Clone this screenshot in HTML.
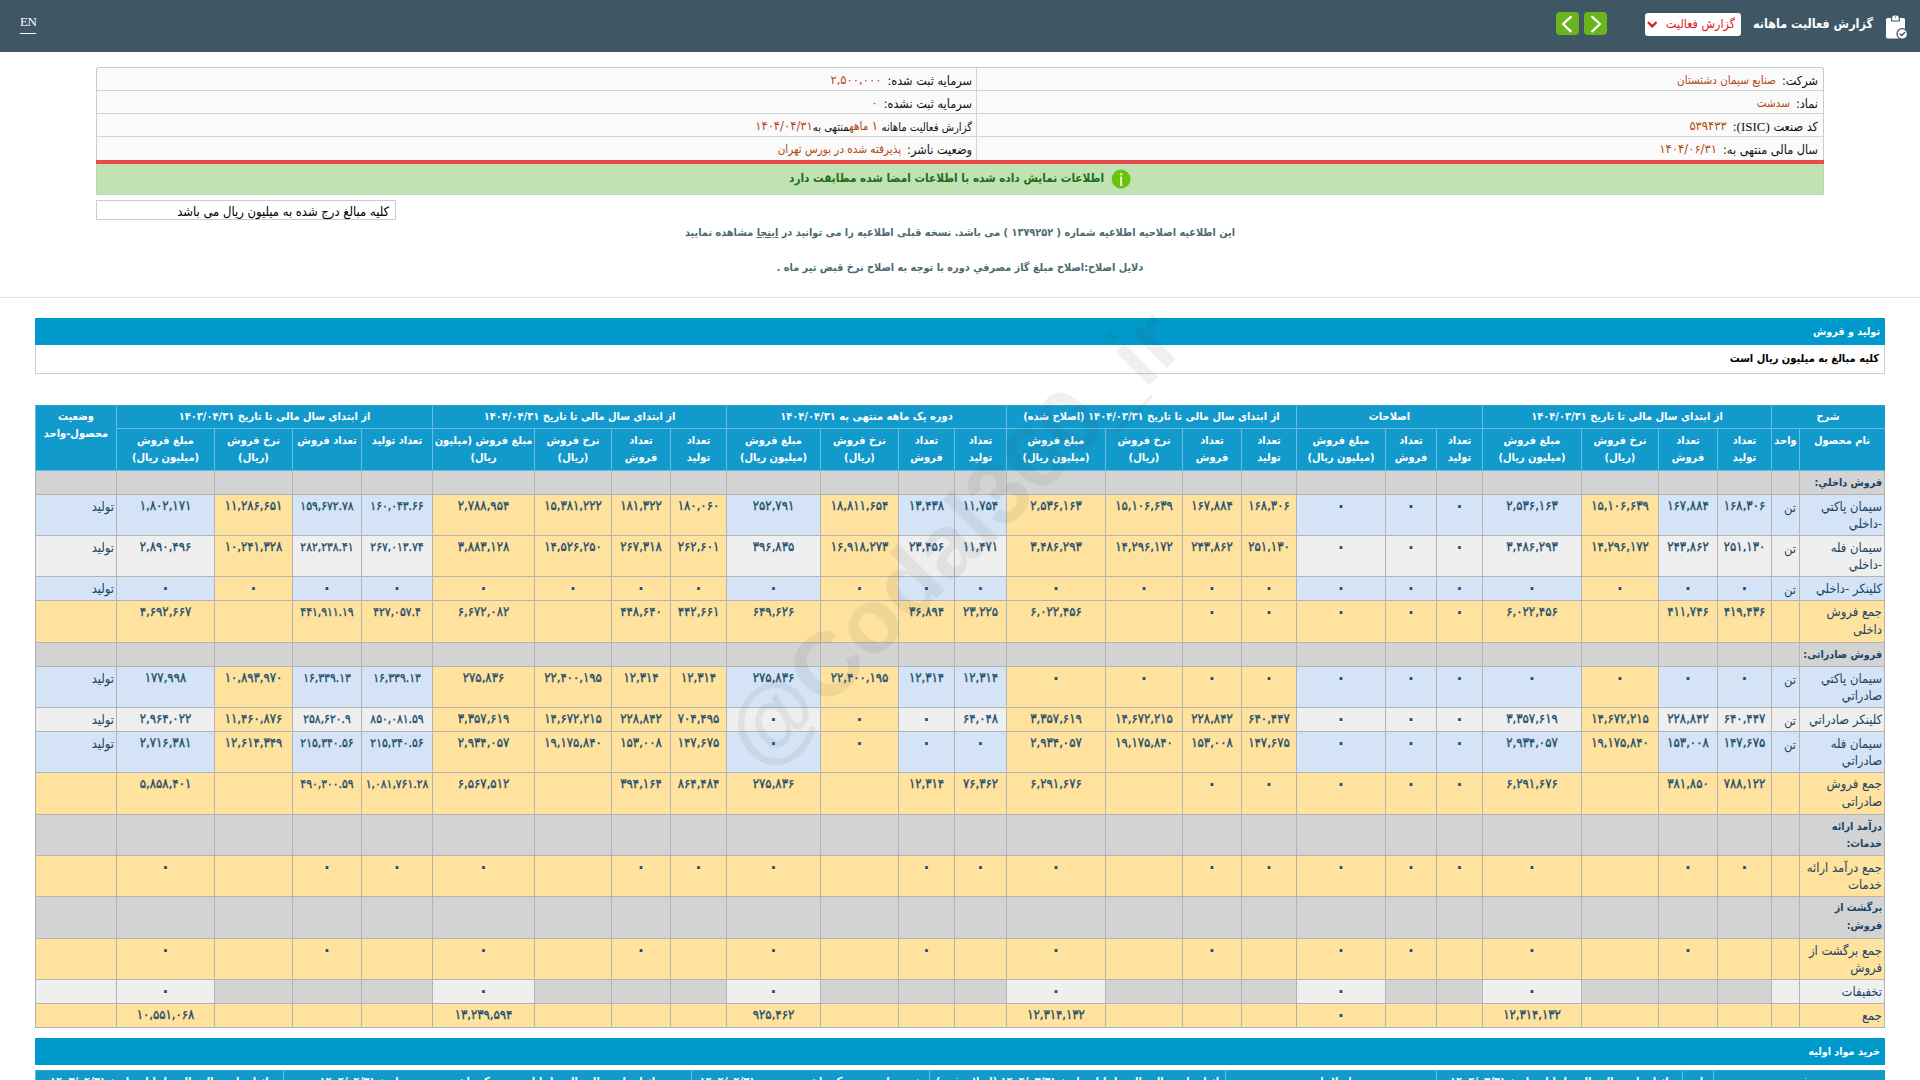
<!DOCTYPE html>
<html lang="fa" dir="rtl">
<head>
<meta charset="utf-8">
<title>گزارش فعالیت ماهانه</title>
<style>
*{box-sizing:border-box}
html,body{margin:0;padding:0}
body{width:1920px;height:1080px;overflow:hidden;background:#fff;position:relative;direction:rtl;
 font-family:"DejaVu Sans Condensed","DejaVu Sans",sans-serif;font-size:12px;color:#000;font-stretch:condensed}
.abs{position:absolute}
#top{left:0;top:0;width:1920px;height:52px;background:#3f5664}
#en{left:20px;top:11px;width:16px;height:23px;border-bottom:1px solid #fff;color:#fff;font-family:"Liberation Serif",serif;font-size:13px;line-height:22px;direction:ltr;text-align:left;letter-spacing:-.4px}
#ttl{right:47px;top:13px;color:#fff;font-weight:bold;font-size:12.5px;line-height:22px;white-space:nowrap}
#sel{left:1645px;top:13px;width:96px;height:23px;background:#fff;border-radius:3px;color:#e0151c;font-size:12.4px;line-height:22px;padding-right:6px;white-space:nowrap}
.gb{top:12px;width:23px;height:23px;background:#6ab41c;border-radius:4px}
#info{left:96px;top:67px;width:1728px;height:94px;border:1px solid #ccc;border-bottom:none;border-radius:3px 3px 0 0;background:#fafafa}
.ir{position:absolute;right:0;left:0;height:1px;background:#d4d4d4}
.it{position:absolute;white-space:nowrap;font-size:12.6px;line-height:22px;color:#111}
.it b{font-weight:normal;color:#b2480e;margin-right:6px;font-size:11.6px;position:relative;top:-1px}
#red{left:96px;top:160px;width:1728px;height:4px;background:#e9494b}
#grn{left:96px;top:164px;width:1728px;height:31px;background:#c1e2b3;border:1px solid #b9d6ac;border-top:none}
#note{left:96px;top:200px;width:300px;height:20px;border:1px solid #ccc;font-size:12.9px;line-height:21px;overflow:hidden;padding-right:6px;white-space:nowrap}
.msg{left:0;width:1920px;text-align:center;color:#4e6a70;font-weight:bold;font-size:10.85px;line-height:20px;white-space:nowrap}
#hr{left:0;top:297px;width:1920px;height:1px;background:#e3e3e3}
.bar{left:35px;width:1850px;height:27px;background:#0099cc;color:#fff;font-weight:bold;font-size:10.7px;line-height:27px;padding-right:5px}
#sub{left:35px;top:345px;width:1850px;height:29px;border:1px solid #ccc;border-top:none;font-weight:bold;font-size:11px;line-height:28px;padding-right:5px}

.tb{border-collapse:separate;border-spacing:0;table-layout:fixed;width:1850px;box-sizing:border-box;border-top:1px solid #2ea3d1}
.tb th:first-child{border-right:1px solid #129acc}
.tb td:first-child{border-right:1px solid #b4b4b4}
.tb th,.tb td{padding:0;margin:0;overflow:hidden;white-space:nowrap;vertical-align:top;line-height:17px}
.tb th{background:#129acc;color:#fff;font-weight:bold;font-size:11px;text-align:center;border-left:1px solid #66bde0;border-bottom:1px solid #66bde0;padding-top:2px}
.tb td{border-left:1px solid #b4b4b4;border-bottom:1px solid #b4b4b4;padding-top:4px;font-size:12.9px;color:#1c4565}
.tb td.n{text-align:center;font-weight:normal;font-size:13px;padding-top:2px;color:#1d4e6d;-webkit-text-stroke:.35px #1d4e6d}
.tb tr.h2 th{padding-top:3px}
.tb td.c{text-align:right;padding-right:3px}
.tb td.nm{text-align:right;padding-right:2px;padding-top:3px}
.tb td.tl{line-height:18px;padding-top:2px}
.tb td.bd{font-weight:bold;font-size:10.7px;padding-top:3px}
.tb td.bd.tl{padding-top:2px}
.tb td.st{text-align:right;padding-right:2px;padding-top:3px}
.tb td.b{background:#d4e4f6}
.tb td.e{background:#efefef}
.tb td.y{background:#ffe29e}
.tb td.g{background:#d3d3d3}
.tb td.dc{font-size:12px;padding-top:3px}
.tb td.z{font-size:17px;padding-top:2px;font-weight:bold;-webkit-text-stroke:0}
.tb tr.z0 td{height:0;padding:0;border:0;line-height:0;font-size:0}
#wm{left:553px;top:488px;width:800px;height:100px;text-align:center;direction:ltr;font-family:"Liberation Sans",sans-serif;font-weight:bold;font-size:90.5px;line-height:100px;color:rgba(60,60,60,.08);transform:rotate(-45deg);white-space:nowrap;pointer-events:none}
.dg{font-family:"DejaVu Sans",sans-serif;font-size:12.5px;font-stretch:normal}
.sf{font-family:"Liberation Serif",serif;font-size:13px}
</style>
</head>
<body>
<div id="top" class="abs"></div>
<div id="en" class="abs">EN</div>
<div id="ttl" class="abs">گزارش فعالیت ماهانه</div>
<div id="sel" class="abs">گزارش فعالیت</div>
<svg class="abs" style="left:1645px;top:19px" width="14" height="11" viewBox="0 0 14 11"><path d="M3.5 3.7 L7.2 7.4 L10.9 3.7" fill="none" stroke="#e01a1a" stroke-width="2.2" stroke-linecap="round" stroke-linejoin="miter"/></svg>
<div class="abs gb" style="left:1584px"><svg width="23" height="23" viewBox="0 0 23 23" style="display:block"><path d="M8.2 4.8 L16 12 L8.2 19.3" fill="none" stroke="#fff" stroke-width="2.3" stroke-linecap="round" stroke-linejoin="round"/></svg></div>
<div class="abs gb" style="left:1556px"><svg width="23" height="23" viewBox="0 0 23 23" style="display:block"><path d="M14.8 4.8 L7 12 L14.8 19.3" fill="none" stroke="#fff" stroke-width="2.3" stroke-linecap="round" stroke-linejoin="round"/></svg></div>

<svg class="abs" style="left:1884px;top:13px" width="26" height="28" viewBox="0 0 26 28">
<rect x="2" y="5" width="19" height="20.4" rx="1.6" fill="#fff"/>
<path d="M7.5 8 V5 A3 3 0 0 1 10.5 2 H12.3 A3 3 0 0 1 15.3 5 V8 Z" fill="#fff" stroke="#3f5664" stroke-width="1.1" stroke-linejoin="round"/>
<circle cx="11.4" cy="4.1" r=".7" fill="#3f5664"/>
<circle cx="18.3" cy="20.9" r="5.9" fill="#3f5664"/>
<circle cx="18.3" cy="20.9" r="4.6" fill="#fff"/>
<path d="M16.1 21 L17.7 22.5 L20.7 19.6" fill="none" stroke="#3f5664" stroke-width="1.4" stroke-linecap="round" stroke-linejoin="round"/>
</svg>
<div id="info" class="abs">
 <div class="ir" style="top:22px"></div><div class="ir" style="top:45px"></div><div class="ir" style="top:68px"></div>
 <div class="abs" style="left:879px;top:0;width:1px;height:93px;background:#d4d4d4"></div>
 <div class="it" style="right:5px;top:2px">شرکت:<b>صنایع سیمان دشتستان</b></div>
 <div class="it" style="right:5px;top:25px">نماد:<b>سدشت</b></div>
 <div class="it" style="right:5px;top:48px">کد صنعت <span class="sf">(ISIC)</span>:<b class="dg">۵۳۹۴۳۳</b></div>
 <div class="it" style="right:5px;top:71px">سال مالی منتهی به:<b class="dg">۱۴۰۴/۰۶/۳۱</b></div>
 <div class="it" style="right:851px;top:2px">سرمایه ثبت شده:<b class="dg">۲,۵۰۰,۰۰۰</b></div>
 <div class="it" style="right:851px;top:25px">سرمایه ثبت نشده:<b class="dg">۰</b></div>
 <div class="it" style="right:851px;top:48px;font-size:11.2px">گزارش فعالیت ماهانه<b style="margin:0"> <span class="dg">۱</span> ماهه</b>منتهی به<b style="margin:0" class="dg">۱۴۰۴/۰۴/۳۱</b></div>
 <div class="it" style="right:851px;top:71px">وضعیت ناشر:<b>پذیرفته شده در بورس تهران</b></div>
</div>
<div id="red" class="abs"></div>
<div id="grn" class="abs"></div>
<div class="abs" style="left:789px;top:167px;width:317px;text-align:left;color:#1b6e1b;font-weight:bold;font-size:11.7px;line-height:22px;white-space:nowrap">اطلاعات نمایش داده شده با اطلاعات امضا شده مطابقت دارد</div>
<svg class="abs" style="left:1111px;top:169px" width="20" height="20" viewBox="0 0 20 20"><circle cx="10.1" cy="10.1" r="9.5" fill="#6cc00f"/><rect x="9.1" y="7.4" width="2" height="9.6" rx=".6" fill="#e6f7cf"/><circle cx="10.1" cy="5.2" r="1.25" fill="#e6f7cf"/></svg>
<div id="note" class="abs">کلیه مبالغ درج شده به میلیون ریال می باشد</div>
<div class="abs msg" style="top:223px">این اطلاعیه اصلاحیه اطلاعیه شماره ( ۱۳۷۹۲۵۲ ) می باشد. نسخه قبلی اطلاعیه را می توانید در <u>اینجا</u> مشاهده نمایید</div>
<div class="abs msg" style="top:258px">دلایل اصلاح:اصلاح مبلغ گاز مصرفي دوره با توجه به اصلاح نرخ قبض تیر ماه .</div>
<div id="hr" class="abs"></div>
<div class="abs bar" style="top:318px">تولید و فروش</div>
<div id="sub" class="abs">کلیه مبالغ به میلیون ریال است</div>
<!--TABLE-->
<table id="t1" class="abs tb" style="left:35px;top:405px"><colgroup>
<col style="width:86px">
<col style="width:28px">
<col style="width:54px">
<col style="width:59px">
<col style="width:77px">
<col style="width:99px">
<col style="width:46px">
<col style="width:51px">
<col style="width:89px">
<col style="width:55px">
<col style="width:59px">
<col style="width:77px">
<col style="width:99px">
<col style="width:52px">
<col style="width:56px">
<col style="width:78px">
<col style="width:94px">
<col style="width:56px">
<col style="width:59px">
<col style="width:77px">
<col style="width:102px">
<col style="width:71px">
<col style="width:69px">
<col style="width:78px">
<col style="width:98px">
<col style="width:81px">
</colgroup>
<tr class="z0"><td></td><td></td><td></td><td></td><td></td><td></td><td></td><td></td><td></td><td></td><td></td><td></td><td></td><td></td><td></td><td></td><td></td><td></td><td></td><td></td><td></td><td></td><td></td><td></td><td></td><td></td></tr>
<tr class="h1" style="height:23px"><th colspan="2">شرح</th><th colspan="4">از ابتدای سال مالی تا تاریخ ۱۴۰۴/۰۳/۳۱</th><th colspan="3">اصلاحات</th><th colspan="4">از ابتدای سال مالی تا تاریخ ۱۴۰۴/۰۳/۳۱ (اصلاح شده)</th><th colspan="4">دوره یک ماهه منتهی به ۱۴۰۴/۰۴/۳۱</th><th colspan="4">از ابتدای سال مالی تا تاریخ ۱۴۰۴/۰۴/۳۱</th><th colspan="4">از ابتدای سال مالی تا تاریخ ۱۴۰۳/۰۴/۳۱</th><th rowspan="2">وضعیت<br>محصول-واحد</th></tr>
<tr class="h2" style="height:42px"><th>نام محصول</th><th>واحد</th><th>تعداد<br>تولید</th><th>تعداد<br>فروش</th><th>نرخ فروش<br>(ریال)</th><th>مبلغ فروش<br>(میلیون ریال)</th><th>تعداد<br>تولید</th><th>تعداد<br>فروش</th><th>مبلغ فروش<br>(میلیون ریال)</th><th>تعداد<br>تولید</th><th>تعداد<br>فروش</th><th>نرخ فروش<br>(ریال)</th><th>مبلغ فروش<br>(میلیون ریال)</th><th>تعداد<br>تولید</th><th>تعداد<br>فروش</th><th>نرخ فروش<br>(ریال)</th><th>مبلغ فروش<br>(میلیون ریال)</th><th>تعداد<br>تولید</th><th>تعداد<br>فروش</th><th>نرخ فروش<br>(ریال)</th><th>مبلغ فروش (میلیون<br>ریال)</th><th>تعداد تولید</th><th>تعداد فروش</th><th>نرخ فروش<br>(ریال)</th><th>مبلغ فروش<br>(میلیون ریال)</th></tr>
<tr style="height:24px"><td class="g nm bd">فروش داخلي:</td><td class="g c"></td><td class="g n"></td><td class="g n"></td><td class="g n"></td><td class="g n"></td><td class="g n"></td><td class="g n"></td><td class="g n"></td><td class="g n"></td><td class="g n"></td><td class="g n"></td><td class="g n"></td><td class="g n"></td><td class="g n"></td><td class="g n"></td><td class="g n"></td><td class="g n"></td><td class="g n"></td><td class="g n"></td><td class="g n"></td><td class="g n"></td><td class="g n"></td><td class="g n"></td><td class="g n"></td><td class="g st"></td></tr>
<tr style="height:41px"><td class="b nm">سيمان پاكتي<br>-داخلي</td><td class="b c">تن</td><td class="b n">۱۶۸,۳۰۶</td><td class="b n">۱۶۷,۸۸۴</td><td class="y n">۱۵,۱۰۶,۶۳۹</td><td class="b n">۲,۵۳۶,۱۶۳</td><td class="b n z">۰</td><td class="b n z">۰</td><td class="b n z">۰</td><td class="y n">۱۶۸,۳۰۶</td><td class="y n">۱۶۷,۸۸۴</td><td class="y n">۱۵,۱۰۶,۶۳۹</td><td class="y n">۲,۵۳۶,۱۶۳</td><td class="b n">۱۱,۷۵۴</td><td class="b n">۱۳,۴۳۸</td><td class="y n">۱۸,۸۱۱,۶۵۴</td><td class="b n">۲۵۲,۷۹۱</td><td class="y n">۱۸۰,۰۶۰</td><td class="y n">۱۸۱,۳۲۲</td><td class="y n">۱۵,۳۸۱,۲۲۲</td><td class="y n">۲,۷۸۸,۹۵۴</td><td class="b n dc">۱۶۰,۰۴۳.۶۶</td><td class="b n dc">۱۵۹,۶۷۲.۷۸</td><td class="y n">۱۱,۲۸۶,۶۵۱</td><td class="b n">۱,۸۰۲,۱۷۱</td><td class="b st">تولید</td></tr>
<tr style="height:41px"><td class="e nm">سيمان فله<br>-داخلي</td><td class="e c">تن</td><td class="e n">۲۵۱,۱۳۰</td><td class="e n">۲۴۳,۸۶۲</td><td class="y n">۱۴,۲۹۶,۱۷۲</td><td class="e n">۳,۴۸۶,۲۹۳</td><td class="e n z">۰</td><td class="e n z">۰</td><td class="e n z">۰</td><td class="y n">۲۵۱,۱۳۰</td><td class="y n">۲۴۳,۸۶۲</td><td class="y n">۱۴,۲۹۶,۱۷۲</td><td class="y n">۳,۴۸۶,۲۹۳</td><td class="e n">۱۱,۴۷۱</td><td class="e n">۲۳,۴۵۶</td><td class="y n">۱۶,۹۱۸,۲۷۳</td><td class="e n">۳۹۶,۸۳۵</td><td class="y n">۲۶۲,۶۰۱</td><td class="y n">۲۶۷,۳۱۸</td><td class="y n">۱۴,۵۲۶,۲۵۰</td><td class="y n">۳,۸۸۳,۱۲۸</td><td class="e n dc">۲۶۷,۰۱۳.۷۴</td><td class="e n dc">۲۸۲,۲۳۸.۴۱</td><td class="y n">۱۰,۲۴۱,۳۲۸</td><td class="e n">۲,۸۹۰,۴۹۶</td><td class="e st">تولید</td></tr>
<tr style="height:24px"><td class="b nm">كلينكر -داخلي</td><td class="b c">تن</td><td class="b n z">۰</td><td class="b n z">۰</td><td class="y n z">۰</td><td class="b n z">۰</td><td class="b n z">۰</td><td class="b n z">۰</td><td class="b n z">۰</td><td class="y n z">۰</td><td class="y n z">۰</td><td class="y n z">۰</td><td class="y n z">۰</td><td class="b n z">۰</td><td class="b n z">۰</td><td class="y n z">۰</td><td class="b n z">۰</td><td class="y n z">۰</td><td class="y n z">۰</td><td class="y n z">۰</td><td class="y n z">۰</td><td class="b n z">۰</td><td class="b n z">۰</td><td class="y n z">۰</td><td class="b n z">۰</td><td class="b st">تولید</td></tr>
<tr style="height:42px"><td class="y nm tl">جمع فروش<br>داخلی</td><td class="y c"></td><td class="y n">۴۱۹,۴۳۶</td><td class="y n">۴۱۱,۷۴۶</td><td class="y n"></td><td class="y n">۶,۰۲۲,۴۵۶</td><td class="y n z">۰</td><td class="y n z">۰</td><td class="y n z">۰</td><td class="y n z">۰</td><td class="y n z">۰</td><td class="y n"></td><td class="y n">۶,۰۲۲,۴۵۶</td><td class="y n">۲۳,۲۲۵</td><td class="y n">۳۶,۸۹۴</td><td class="y n"></td><td class="y n">۶۴۹,۶۲۶</td><td class="y n">۴۴۲,۶۶۱</td><td class="y n">۴۴۸,۶۴۰</td><td class="y n"></td><td class="y n">۶,۶۷۲,۰۸۲</td><td class="y n dc">۴۲۷,۰۵۷.۴</td><td class="y n dc">۴۴۱,۹۱۱.۱۹</td><td class="y n"></td><td class="y n">۴,۶۹۲,۶۶۷</td><td class="y st"></td></tr>
<tr style="height:24px"><td class="g nm bd">فروش صادراتی:</td><td class="g c"></td><td class="g n"></td><td class="g n"></td><td class="g n"></td><td class="g n"></td><td class="g n"></td><td class="g n"></td><td class="g n"></td><td class="g n"></td><td class="g n"></td><td class="g n"></td><td class="g n"></td><td class="g n"></td><td class="g n"></td><td class="g n"></td><td class="g n"></td><td class="g n"></td><td class="g n"></td><td class="g n"></td><td class="g n"></td><td class="g n"></td><td class="g n"></td><td class="g n"></td><td class="g n"></td><td class="g st"></td></tr>
<tr style="height:41px"><td class="b nm">سيمان پاكتي<br>صادراتي</td><td class="b c">تن</td><td class="b n z">۰</td><td class="b n z">۰</td><td class="y n z">۰</td><td class="b n z">۰</td><td class="b n z">۰</td><td class="b n z">۰</td><td class="b n z">۰</td><td class="y n z">۰</td><td class="y n z">۰</td><td class="y n z">۰</td><td class="y n z">۰</td><td class="b n">۱۲,۳۱۴</td><td class="b n">۱۲,۳۱۴</td><td class="y n">۲۲,۴۰۰,۱۹۵</td><td class="b n">۲۷۵,۸۳۶</td><td class="y n">۱۲,۳۱۴</td><td class="y n">۱۲,۳۱۴</td><td class="y n">۲۲,۴۰۰,۱۹۵</td><td class="y n">۲۷۵,۸۳۶</td><td class="b n dc">۱۶,۳۳۹.۱۳</td><td class="b n dc">۱۶,۳۳۹.۱۳</td><td class="y n">۱۰,۸۹۳,۹۷۰</td><td class="b n">۱۷۷,۹۹۸</td><td class="b st">تولید</td></tr>
<tr style="height:24px"><td class="e nm">كلينكر صادراتي</td><td class="e c">تن</td><td class="e n">۶۴۰,۴۴۷</td><td class="e n">۲۲۸,۸۴۲</td><td class="y n">۱۴,۶۷۲,۲۱۵</td><td class="e n">۳,۳۵۷,۶۱۹</td><td class="e n z">۰</td><td class="e n z">۰</td><td class="e n z">۰</td><td class="y n">۶۴۰,۴۴۷</td><td class="y n">۲۲۸,۸۴۲</td><td class="y n">۱۴,۶۷۲,۲۱۵</td><td class="y n">۳,۳۵۷,۶۱۹</td><td class="e n">۶۴,۰۴۸</td><td class="e n z">۰</td><td class="y n z">۰</td><td class="e n z">۰</td><td class="y n">۷۰۴,۴۹۵</td><td class="y n">۲۲۸,۸۴۲</td><td class="y n">۱۴,۶۷۲,۲۱۵</td><td class="y n">۳,۳۵۷,۶۱۹</td><td class="e n dc">۸۵۰,۰۸۱.۵۹</td><td class="e n dc">۲۵۸,۶۲۰.۹</td><td class="y n">۱۱,۴۶۰,۸۷۶</td><td class="e n">۲,۹۶۴,۰۲۲</td><td class="e st">تولید</td></tr>
<tr style="height:41px"><td class="b nm">سيمان فله<br>صادراتي</td><td class="b c">تن</td><td class="b n">۱۴۷,۶۷۵</td><td class="b n">۱۵۳,۰۰۸</td><td class="y n">۱۹,۱۷۵,۸۴۰</td><td class="b n">۲,۹۳۴,۰۵۷</td><td class="b n z">۰</td><td class="b n z">۰</td><td class="b n z">۰</td><td class="y n">۱۴۷,۶۷۵</td><td class="y n">۱۵۳,۰۰۸</td><td class="y n">۱۹,۱۷۵,۸۴۰</td><td class="y n">۲,۹۳۴,۰۵۷</td><td class="b n z">۰</td><td class="b n z">۰</td><td class="y n z">۰</td><td class="b n z">۰</td><td class="y n">۱۴۷,۶۷۵</td><td class="y n">۱۵۳,۰۰۸</td><td class="y n">۱۹,۱۷۵,۸۴۰</td><td class="y n">۲,۹۳۴,۰۵۷</td><td class="b n dc">۲۱۵,۳۴۰.۵۶</td><td class="b n dc">۲۱۵,۳۴۰.۵۶</td><td class="y n">۱۲,۶۱۴,۳۴۹</td><td class="b n">۲,۷۱۶,۳۸۱</td><td class="b st">تولید</td></tr>
<tr style="height:42px"><td class="y nm tl">جمع فروش<br>صادراتی</td><td class="y c"></td><td class="y n">۷۸۸,۱۲۲</td><td class="y n">۳۸۱,۸۵۰</td><td class="y n"></td><td class="y n">۶,۲۹۱,۶۷۶</td><td class="y n z">۰</td><td class="y n z">۰</td><td class="y n z">۰</td><td class="y n z">۰</td><td class="y n z">۰</td><td class="y n"></td><td class="y n">۶,۲۹۱,۶۷۶</td><td class="y n">۷۶,۳۶۲</td><td class="y n">۱۲,۳۱۴</td><td class="y n"></td><td class="y n">۲۷۵,۸۳۶</td><td class="y n">۸۶۴,۴۸۴</td><td class="y n">۳۹۴,۱۶۴</td><td class="y n"></td><td class="y n">۶,۵۶۷,۵۱۲</td><td class="y n dc">۱,۰۸۱,۷۶۱.۲۸</td><td class="y n dc">۴۹۰,۳۰۰.۵۹</td><td class="y n"></td><td class="y n">۵,۸۵۸,۴۰۱</td><td class="y st"></td></tr>
<tr style="height:41px"><td class="g nm bd">درآمد ارائه<br>خدمات:</td><td class="g c"></td><td class="g n"></td><td class="g n"></td><td class="g n"></td><td class="g n"></td><td class="g n"></td><td class="g n"></td><td class="g n"></td><td class="g n"></td><td class="g n"></td><td class="g n"></td><td class="g n"></td><td class="g n"></td><td class="g n"></td><td class="g n"></td><td class="g n"></td><td class="g n"></td><td class="g n"></td><td class="g n"></td><td class="g n"></td><td class="g n"></td><td class="g n"></td><td class="g n"></td><td class="g n"></td><td class="g st"></td></tr>
<tr style="height:41px"><td class="y nm">جمع درآمد ارائه<br>خدمات</td><td class="y c"></td><td class="y n z">۰</td><td class="y n z">۰</td><td class="y n"></td><td class="y n z">۰</td><td class="y n z">۰</td><td class="y n z">۰</td><td class="y n z">۰</td><td class="y n z">۰</td><td class="y n z">۰</td><td class="y n"></td><td class="y n z">۰</td><td class="y n z">۰</td><td class="y n z">۰</td><td class="y n"></td><td class="y n z">۰</td><td class="y n z">۰</td><td class="y n z">۰</td><td class="y n"></td><td class="y n z">۰</td><td class="y n z">۰</td><td class="y n z">۰</td><td class="y n"></td><td class="y n z">۰</td><td class="y st"></td></tr>
<tr style="height:42px"><td class="g nm bd tl">برگشت از<br>فروش:</td><td class="g c"></td><td class="g n"></td><td class="g n"></td><td class="g n"></td><td class="g n"></td><td class="g n"></td><td class="g n"></td><td class="g n"></td><td class="g n"></td><td class="g n"></td><td class="g n"></td><td class="g n"></td><td class="g n"></td><td class="g n"></td><td class="g n"></td><td class="g n"></td><td class="g n"></td><td class="g n"></td><td class="g n"></td><td class="g n"></td><td class="g n"></td><td class="g n"></td><td class="g n"></td><td class="g n"></td><td class="g st"></td></tr>
<tr style="height:41px"><td class="y nm">جمع برگشت از<br>فروش</td><td class="y c"></td><td class="y n"></td><td class="y n z">۰</td><td class="y n"></td><td class="y n z">۰</td><td class="y n"></td><td class="y n z">۰</td><td class="y n z">۰</td><td class="y n"></td><td class="y n z">۰</td><td class="y n"></td><td class="y n z">۰</td><td class="y n"></td><td class="y n z">۰</td><td class="y n"></td><td class="y n z">۰</td><td class="y n"></td><td class="y n z">۰</td><td class="y n"></td><td class="y n z">۰</td><td class="y n"></td><td class="y n z">۰</td><td class="y n"></td><td class="y n z">۰</td><td class="y st"></td></tr>
<tr style="height:24px"><td class="e nm">تخفیفات</td><td class="e c"></td><td class="g n"></td><td class="g n"></td><td class="g n"></td><td class="e n z">۰</td><td class="g n"></td><td class="g n"></td><td class="e n z">۰</td><td class="g n"></td><td class="g n"></td><td class="g n"></td><td class="e n z">۰</td><td class="g n"></td><td class="g n"></td><td class="g n"></td><td class="e n z">۰</td><td class="g n"></td><td class="g n"></td><td class="g n"></td><td class="e n z">۰</td><td class="g n"></td><td class="g n"></td><td class="g n"></td><td class="e n z">۰</td><td class="e st"></td></tr>
<tr style="height:24px"><td class="y nm">جمع</td><td class="y c"></td><td class="y n"></td><td class="y n"></td><td class="y n"></td><td class="y n">۱۲,۳۱۴,۱۳۲</td><td class="y n"></td><td class="y n"></td><td class="y n z">۰</td><td class="y n"></td><td class="y n"></td><td class="y n"></td><td class="y n">۱۲,۳۱۴,۱۳۲</td><td class="y n"></td><td class="y n"></td><td class="y n"></td><td class="y n">۹۲۵,۴۶۲</td><td class="y n"></td><td class="y n"></td><td class="y n"></td><td class="y n">۱۳,۲۳۹,۵۹۴</td><td class="y n"></td><td class="y n"></td><td class="y n"></td><td class="y n">۱۰,۵۵۱,۰۶۸</td><td class="y st"></td></tr>
</table>
<!--/TABLE-->
<div class="abs bar" style="top:1038px">خرید مواد اولیه</div>
<!--TABLE2-->
<table id="t2" class="abs tb" style="left:35px;top:1070px"><colgroup><col style="width:172px"><col style="width:31px"><col style="width:246px"><col style="width:211px"><col style="width:296px"><col style="width:238px"><col style="width:408px"><col style="width:248px"></colgroup><tr style="height:23px"><th>شرح</th><th>واحد</th><th>از ابتدای سال مالی تا پایان تاریخ ۱۴۰۴/۰۳/۳۱</th><th>اصلاحات</th><th>از ابتدای سال مالی تا پایان تاریخ ۱۴۰۴/۰۳/۳۱ (اصلاح شده)</th><th>خرید طی دوره یک ماهه منتهی به ۱۴۰۴/۰۴/۳۱</th><th>از ابتدای سال مالی تا پایان دوره یک ماهه منتهی به تاریخ ۱۴۰۴/۰۴/۳۱</th><th>از ابتدای سال مالی تا پایان تاریخ ۱۴۰۳/۰۴/۳۱</th></tr></table>
<div id="wm" class="abs">@Codal360_ir</div>
</body>
</html>
